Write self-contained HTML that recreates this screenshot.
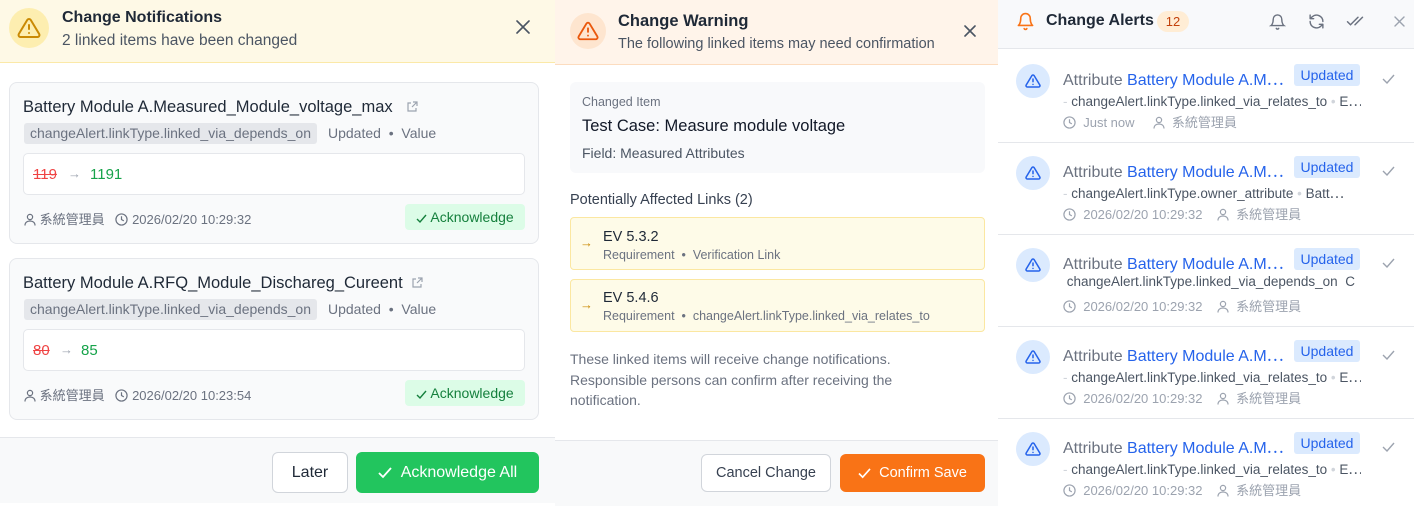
<!DOCTYPE html>
<html><head><meta charset="utf-8"><style>
*{box-sizing:border-box;margin:0;padding:0}
body{width:1414px;height:512px;overflow:hidden;background:#fff;font-family:"Liberation Sans","Noto Sans CJK TC",sans-serif;color:#1f2937;position:relative}
.a{position:absolute;white-space:nowrap}
.g{color:#6b7280}
svg{display:inline-block;vertical-align:-2px}
svg.a{display:block}
</style></head><body>

<!-- LEFT PANEL -->
<div class="a" style="left:0;top:0;width:555px;height:63px;background:#fef9e6;border-bottom:1px solid #fbe9a8"></div>
<div class="a" style="left:9px;top:8px;width:40px;height:40px;border-radius:50%;background:#fdeeb0"></div>
<svg class="a" style="left:17px;top:16px" width="24" height="24" viewBox="0 0 24 24" fill="none" stroke="#ca8a04" stroke-width="2" stroke-linecap="round" stroke-linejoin="round"><path d="M10.3 3.9 1.8 18a2 2 0 0 0 1.7 3h17a2 2 0 0 0 1.7-3L13.7 3.9a2 2 0 0 0-3.4 0z"/><path d="M12 9v4M12 17h.01"/></svg>
<div class="a" style="left:62px;top:9px;font-size:16px;font-weight:bold;color:#1f2937">Change Notifications</div>
<div class="a" style="left:62px;top:32px;font-size:15.5px;color:#4b5563">2 linked items have been changed</div>
<svg class="a" style="left:516px;top:20px" width="14" height="14" viewBox="0 0 14 14" stroke="#4b5563" stroke-width="1.6" stroke-linecap="round"><path d="M1 1l12 12M13 1L1 13"/></svg>

<div class="a" style="left:9px;top:82px;width:530px;height:162px;border:1px solid #e5e7eb;border-radius:8px;background:#f9fafb"></div>
<div class="a" style="left:23px;top:98px;font-size:16.5px;color:#1f2937">Battery Module A.Measured_Module_voltage_max</div>
<svg class="a" style="left:406px;top:101px" width="12" height="12" viewBox="0 0 12 12" fill="none" stroke="#9ca3af" stroke-width="1.2"><path d="M5 2H2v8h8V7M7 1h4v4M11 1L6 6"/></svg>
<div class="a" style="left:24px;top:123px;height:21px;padding:0 6px;background:#e5e7eb;border-radius:3px;font-size:14px;line-height:21px;color:#6b7280">changeAlert.linkType.linked_via_depends_on</div>
<div class="a g" style="left:328px;top:125px;font-size:14px">Updated &nbsp;•&nbsp; Value</div>
<div class="a" style="left:23px;top:153px;width:502px;height:42px;background:#fff;border:1px solid #e5e7eb;border-radius:5px"></div>
<div class="a" style="left:33px;top:166px;font-size:15px;color:#ef4444;text-decoration:line-through">119</div>
<div class="a" style="left:68px;top:166px;font-size:13px;color:#9ca3af">→</div>
<div class="a" style="left:90px;top:166px;font-size:15px;color:#16a34a">1191</div>
<div class="a g" style="left:24px;top:209px;font-size:13px"><svg width="12" height="13" viewBox="0 0 12 13" fill="none" stroke="#6b7280" stroke-width="1.2"><circle cx="6" cy="4" r="2.6"/><path d="M1 12.5c0-3 2.2-4.5 5-4.5s5 1.5 5 4.5"/></svg> 系統管理員 &nbsp;&nbsp;<svg width="13" height="13" viewBox="0 0 14 14" fill="none" stroke="#6b7280" stroke-width="1.3"><circle cx="7" cy="7" r="6"/><path d="M7 3.5V7l2.5 1.5"/></svg> 2026/02/20 10:29:32</div>
<div class="a" style="left:405px;top:204px;width:120px;height:26px;background:#dcfce7;border-radius:4px;font-size:14px;line-height:26px;text-align:center;color:#15803d"><svg width="11" height="10" viewBox="0 0 11 10" fill="none" stroke="#15803d" stroke-width="1.4"><path d="M1 5l3 3 6-7"/></svg> Acknowledge</div>

<div class="a" style="left:9px;top:258px;width:530px;height:162px;border:1px solid #e5e7eb;border-radius:8px;background:#f9fafb"></div>
<div class="a" style="left:23px;top:274px;font-size:16.5px;color:#1f2937">Battery Module A.RFQ_Module_Dischareg_Cureent</div>
<svg class="a" style="left:411px;top:277px" width="12" height="12" viewBox="0 0 12 12" fill="none" stroke="#9ca3af" stroke-width="1.2"><path d="M5 2H2v8h8V7M7 1h4v4M11 1L6 6"/></svg>
<div class="a" style="left:24px;top:299px;height:21px;padding:0 6px;background:#e5e7eb;border-radius:3px;font-size:14px;line-height:21px;color:#6b7280">changeAlert.linkType.linked_via_depends_on</div>
<div class="a g" style="left:328px;top:301px;font-size:14px">Updated &nbsp;•&nbsp; Value</div>
<div class="a" style="left:23px;top:329px;width:502px;height:42px;background:#fff;border:1px solid #e5e7eb;border-radius:5px"></div>
<div class="a" style="left:33px;top:342px;font-size:15px;color:#ef4444;text-decoration:line-through">80</div>
<div class="a" style="left:60px;top:342px;font-size:13px;color:#9ca3af">→</div>
<div class="a" style="left:81px;top:342px;font-size:15px;color:#16a34a">85</div>
<div class="a g" style="left:24px;top:385px;font-size:13px"><svg width="12" height="13" viewBox="0 0 12 13" fill="none" stroke="#6b7280" stroke-width="1.2"><circle cx="6" cy="4" r="2.6"/><path d="M1 12.5c0-3 2.2-4.5 5-4.5s5 1.5 5 4.5"/></svg> 系統管理員 &nbsp;&nbsp;<svg width="13" height="13" viewBox="0 0 14 14" fill="none" stroke="#6b7280" stroke-width="1.3"><circle cx="7" cy="7" r="6"/><path d="M7 3.5V7l2.5 1.5"/></svg> 2026/02/20 10:23:54</div>
<div class="a" style="left:405px;top:380px;width:120px;height:26px;background:#dcfce7;border-radius:4px;font-size:14px;line-height:26px;text-align:center;color:#15803d"><svg width="11" height="10" viewBox="0 0 11 10" fill="none" stroke="#15803d" stroke-width="1.4"><path d="M1 5l3 3 6-7"/></svg> Acknowledge</div>

<div class="a" style="left:0;top:437px;width:555px;height:66px;background:#f8f9fa;border-top:1px solid #e5e7eb"></div>
<div class="a" style="left:272px;top:452px;width:76px;height:41px;background:#fff;border:1px solid #d1d5db;border-radius:6px;font-size:16px;line-height:39px;text-align:center">Later</div>
<div class="a" style="left:356px;top:452px;width:183px;height:41px;background:#22c55e;border-radius:6px;font-size:16px;line-height:41px;text-align:center;color:#fff"><svg width="14" height="12" viewBox="0 0 14 12" fill="none" stroke="#fff" stroke-width="1.8"><path d="M1 6l4 4 8-9"/></svg> &nbsp;Acknowledge All</div>

<!-- MIDDLE PANEL -->
<div class="a" style="left:555px;top:0;width:443px;height:65px;background:#fff4ea;border-bottom:1px solid #fcdcbf"></div>
<div class="a" style="left:570px;top:13px;width:36px;height:36px;border-radius:50%;background:#fee5cf"></div>
<svg class="a" style="left:577px;top:20px" width="22" height="22" viewBox="0 0 24 24" fill="none" stroke="#ea580c" stroke-width="2" stroke-linecap="round" stroke-linejoin="round"><path d="M10.3 3.9 1.8 18a2 2 0 0 0 1.7 3h17a2 2 0 0 0 1.7-3L13.7 3.9a2 2 0 0 0-3.4 0z"/><path d="M12 9v4M12 17h.01"/></svg>
<div class="a" style="left:618px;top:12px;font-size:16.5px;font-weight:bold">Change Warning</div>
<div class="a" style="left:618px;top:36px;font-size:14.5px;color:#4b5563">The following linked items may need confirmation</div>
<svg class="a" style="left:964px;top:25px" width="12" height="12" viewBox="0 0 12 12" stroke="#4b5563" stroke-width="1.6" stroke-linecap="round"><path d="M1 1l10 10M11 1L1 11"/></svg>

<div class="a" style="left:570px;top:82px;width:415px;height:91px;background:#f8f9fb;border-radius:6px"></div>
<div class="a g" style="left:582px;top:95px;font-size:12.5px">Changed Item</div>
<div class="a" style="left:582px;top:117px;font-size:16.5px;color:#111827">Test Case: Measure module voltage</div>
<div class="a" style="left:582px;top:145px;font-size:14px;color:#4b5563">Field: Measured Attributes</div>
<div class="a" style="left:570px;top:192px;font-size:14.5px;color:#374151">Potentially Affected Links (2)</div>

<div class="a" style="left:570px;top:217px;width:415px;height:53px;background:#fefbe8;border:1px solid #fbe7a1;border-radius:4px"></div>
<div class="a" style="left:580px;top:235px;font-size:13px;color:#ca8a04">→</div>
<div class="a" style="left:603px;top:229px;font-size:14.5px">EV 5.3.2</div>
<div class="a g" style="left:603px;top:248px;font-size:12.5px">Requirement &nbsp;•&nbsp; Verification Link</div>
<div class="a" style="left:570px;top:279px;width:415px;height:53px;background:#fefbe8;border:1px solid #fbe7a1;border-radius:4px"></div>
<div class="a" style="left:580px;top:297px;font-size:13px;color:#ca8a04">→</div>
<div class="a" style="left:603px;top:290px;font-size:14.5px">EV 5.4.6</div>
<div class="a g" style="left:603px;top:309px;font-size:12.5px">Requirement &nbsp;•&nbsp; changeAlert.linkType.linked_via_relates_to</div>
<div class="a g" style="left:570px;top:349px;font-size:14px;line-height:20.5px;white-space:normal;width:360px">These linked items will receive change notifications. Responsible persons can confirm after receiving the notification.</div>

<div class="a" style="left:555px;top:440px;width:443px;height:66px;background:#f8f9fa;border-top:1px solid #e5e7eb"></div>
<div class="a" style="left:701px;top:454px;width:130px;height:38px;background:#fff;border:1px solid #d1d5db;border-radius:6px;font-size:14.5px;line-height:36px;text-align:center;color:#374151">Cancel Change</div>
<div class="a" style="left:840px;top:454px;width:145px;height:38px;background:#f97316;border-radius:6px;font-size:14.5px;line-height:38px;text-align:center;color:#fff"><svg width="13" height="11" viewBox="0 0 14 12" fill="none" stroke="#fff" stroke-width="1.8"><path d="M1 6l4 4 8-9"/></svg> &nbsp;Confirm Save</div>

<!-- RIGHT PANEL -->
<div class="a" style="left:998px;top:0;width:416px;height:49px;background:#f8f9fb;border-bottom:1px solid #e5e7eb"></div>
<svg class="a" style="left:1016px;top:11px" width="19" height="21" viewBox="0 0 24 24" fill="none" stroke="#f97316" stroke-width="2" stroke-linecap="round" stroke-linejoin="round"><path d="M6 8a6 6 0 0 1 12 0c0 7 3 9 3 9H3s3-2 3-9"/><path d="M10.3 21a1.9 1.9 0 0 0 3.4 0"/></svg>
<div class="a" style="left:1046px;top:12px;font-size:16px;font-weight:bold;color:#1f2937">Change Alerts</div>
<div class="a" style="left:1157px;top:11px;width:32px;height:21px;background:#ffedd5;border-radius:11px;font-size:13px;line-height:21px;text-align:center;color:#c2410c">12</div>
<svg class="a" style="left:1269px;top:13px" width="17" height="18" viewBox="0 0 24 24" fill="none" stroke="#6b7280" stroke-width="2" stroke-linecap="round"><path d="M6 8a6 6 0 0 1 12 0c0 7 3 9 3 9H3s3-2 3-9"/><path d="M10.3 21a1.9 1.9 0 0 0 3.4 0"/></svg>
<svg class="a" style="left:1308px;top:13px" width="17" height="17" viewBox="0 0 24 24" fill="none" stroke="#6b7280" stroke-width="2" stroke-linecap="round" stroke-linejoin="round"><path d="M21 12a9 9 0 0 0-15-6.7L3 8M3 3v5h5M3 12a9 9 0 0 0 15 6.7L21 16M21 21v-5h-5"/></svg>
<svg class="a" style="left:1346px;top:14px" width="18" height="14" viewBox="0 0 24 18" fill="none" stroke="#6b7280" stroke-width="2" stroke-linecap="round"><path d="M2 10l4 4 10-10M12 14l10-10"/></svg>
<svg class="a" style="left:1394px;top:16px" width="11" height="11" viewBox="0 0 11 11" stroke="#9ca3af" stroke-width="1.4" stroke-linecap="round"><path d="M1 1l9 9M10 1L1 10"/></svg>

<div class="a" style="left:998px;top:142px;width:416px;border-top:1px solid #e5e7eb"></div>
<div class="a" style="left:998px;top:234px;width:416px;border-top:1px solid #e5e7eb"></div>
<div class="a" style="left:998px;top:326px;width:416px;border-top:1px solid #e5e7eb"></div>
<div class="a" style="left:998px;top:418px;width:416px;border-top:1px solid #e5e7eb"></div>

<div class="a" style="left:1016px;top:64px;width:34px;height:34px;border-radius:50%;background:#dbeafe"></div>
<div class="a" style="left:1016px;top:156px;width:34px;height:34px;border-radius:50%;background:#dbeafe"></div>
<div class="a" style="left:1016px;top:248px;width:34px;height:34px;border-radius:50%;background:#dbeafe"></div>
<div class="a" style="left:1016px;top:340px;width:34px;height:34px;border-radius:50%;background:#dbeafe"></div>
<div class="a" style="left:1016px;top:432px;width:34px;height:34px;border-radius:50%;background:#dbeafe"></div>

<svg class="a" style="left:1025px;top:73px" width="16" height="16" viewBox="0 0 24 24" fill="none" stroke="#2563eb" stroke-width="2.3" stroke-linecap="round" stroke-linejoin="round"><path d="M10.3 3.9 1.8 18a2 2 0 0 0 1.7 3h17a2 2 0 0 0 1.7-3L13.7 3.9a2 2 0 0 0-3.4 0z"/><path d="M12 9v4M12 17h.01"/></svg>
<svg class="a" style="left:1025px;top:165px" width="16" height="16" viewBox="0 0 24 24" fill="none" stroke="#2563eb" stroke-width="2.3" stroke-linecap="round" stroke-linejoin="round"><path d="M10.3 3.9 1.8 18a2 2 0 0 0 1.7 3h17a2 2 0 0 0 1.7-3L13.7 3.9a2 2 0 0 0-3.4 0z"/><path d="M12 9v4M12 17h.01"/></svg>
<svg class="a" style="left:1025px;top:257px" width="16" height="16" viewBox="0 0 24 24" fill="none" stroke="#2563eb" stroke-width="2.3" stroke-linecap="round" stroke-linejoin="round"><path d="M10.3 3.9 1.8 18a2 2 0 0 0 1.7 3h17a2 2 0 0 0 1.7-3L13.7 3.9a2 2 0 0 0-3.4 0z"/><path d="M12 9v4M12 17h.01"/></svg>
<svg class="a" style="left:1025px;top:349px" width="16" height="16" viewBox="0 0 24 24" fill="none" stroke="#2563eb" stroke-width="2.3" stroke-linecap="round" stroke-linejoin="round"><path d="M10.3 3.9 1.8 18a2 2 0 0 0 1.7 3h17a2 2 0 0 0 1.7-3L13.7 3.9a2 2 0 0 0-3.4 0z"/><path d="M12 9v4M12 17h.01"/></svg>
<svg class="a" style="left:1025px;top:441px" width="16" height="16" viewBox="0 0 24 24" fill="none" stroke="#2563eb" stroke-width="2.3" stroke-linecap="round" stroke-linejoin="round"><path d="M10.3 3.9 1.8 18a2 2 0 0 0 1.7 3h17a2 2 0 0 0 1.7-3L13.7 3.9a2 2 0 0 0-3.4 0z"/><path d="M12 9v4M12 17h.01"/></svg>

<div class="a" style="left:1063px;top:66px;font-size:16px;color:#6b7280">Attribute <span style="color:#2563eb">Battery Module A.M⋯</span></div>
<div class="a" style="left:1063px;top:158px;font-size:16px;color:#6b7280">Attribute <span style="color:#2563eb">Battery Module A.M⋯</span></div>
<div class="a" style="left:1063px;top:250px;font-size:16px;color:#6b7280">Attribute <span style="color:#2563eb">Battery Module A.M⋯</span></div>
<div class="a" style="left:1063px;top:342px;font-size:16px;color:#6b7280">Attribute <span style="color:#2563eb">Battery Module A.M⋯</span></div>
<div class="a" style="left:1063px;top:434px;font-size:16px;color:#6b7280">Attribute <span style="color:#2563eb">Battery Module A.M⋯</span></div>

<div class="a" style="left:1294px;top:64px;width:66px;height:22px;background:#dbeafe;border-radius:3px;font-size:14px;line-height:22px;text-align:center;color:#2563eb">Updated</div>
<div class="a" style="left:1294px;top:156px;width:66px;height:22px;background:#dbeafe;border-radius:3px;font-size:14px;line-height:22px;text-align:center;color:#2563eb">Updated</div>
<div class="a" style="left:1294px;top:248px;width:66px;height:22px;background:#dbeafe;border-radius:3px;font-size:14px;line-height:22px;text-align:center;color:#2563eb">Updated</div>
<div class="a" style="left:1294px;top:340px;width:66px;height:22px;background:#dbeafe;border-radius:3px;font-size:14px;line-height:22px;text-align:center;color:#2563eb">Updated</div>
<div class="a" style="left:1294px;top:432px;width:66px;height:22px;background:#dbeafe;border-radius:3px;font-size:14px;line-height:22px;text-align:center;color:#2563eb">Updated</div>

<svg class="a" style="left:1382px;top:74px" width="13" height="10" viewBox="0 0 13 10" fill="none" stroke="#9ca3af" stroke-width="1.4"><path d="M1 5l4 4 7-8"/></svg>
<svg class="a" style="left:1382px;top:166px" width="13" height="10" viewBox="0 0 13 10" fill="none" stroke="#9ca3af" stroke-width="1.4"><path d="M1 5l4 4 7-8"/></svg>
<svg class="a" style="left:1382px;top:258px" width="13" height="10" viewBox="0 0 13 10" fill="none" stroke="#9ca3af" stroke-width="1.4"><path d="M1 5l4 4 7-8"/></svg>
<svg class="a" style="left:1382px;top:350px" width="13" height="10" viewBox="0 0 13 10" fill="none" stroke="#9ca3af" stroke-width="1.4"><path d="M1 5l4 4 7-8"/></svg>
<svg class="a" style="left:1382px;top:442px" width="13" height="10" viewBox="0 0 13 10" fill="none" stroke="#9ca3af" stroke-width="1.4"><path d="M1 5l4 4 7-8"/></svg>

<div class="a" style="left:1063px;top:90px;width:298px;overflow:hidden;font-size:13.5px;color:#4b5563"><span style="color:#d1d5db">-</span> changeAlert.linkType.linked_via_relates_to <span style="color:#d1d5db">•</span> E⋯</div>
<div class="a" style="left:1063px;top:182px;width:298px;overflow:hidden;font-size:13.5px;color:#4b5563"><span style="color:#d1d5db">-</span> changeAlert.linkType.owner_attribute <span style="color:#d1d5db">•</span> Batt⋯</div>
<div class="a" style="left:1063px;top:274px;width:298px;overflow:hidden;font-size:13.5px;color:#4b5563">&nbsp;changeAlert.linkType.linked_via_depends_on &nbsp;C</div>
<div class="a" style="left:1063px;top:366px;width:298px;overflow:hidden;font-size:13.5px;color:#4b5563"><span style="color:#d1d5db">-</span> changeAlert.linkType.linked_via_relates_to <span style="color:#d1d5db">•</span> E⋯</div>
<div class="a" style="left:1063px;top:458px;width:298px;overflow:hidden;font-size:13.5px;color:#4b5563"><span style="color:#d1d5db">-</span> changeAlert.linkType.linked_via_relates_to <span style="color:#d1d5db">•</span> E⋯</div>

<div class="a" style="left:1063px;top:112px;font-size:13px;color:#9ca3af"><svg width="13" height="13" viewBox="0 0 14 14" fill="none" stroke="#9ca3af" stroke-width="1.3"><circle cx="7" cy="7" r="6"/><path d="M7 3.5V7l2.5 1.5"/></svg> &nbsp;Just now &nbsp;&nbsp;&nbsp;&nbsp;<svg width="12" height="13" viewBox="0 0 12 13" fill="none" stroke="#9ca3af" stroke-width="1.2"><circle cx="6" cy="4" r="2.6"/><path d="M1 12.5c0-3 2.2-4.5 5-4.5s5 1.5 5 4.5"/></svg> &nbsp;系統管理員</div>
<div class="a" style="left:1063px;top:204px;font-size:13px;color:#9ca3af"><svg width="13" height="13" viewBox="0 0 14 14" fill="none" stroke="#9ca3af" stroke-width="1.3"><circle cx="7" cy="7" r="6"/><path d="M7 3.5V7l2.5 1.5"/></svg> &nbsp;2026/02/20 10:29:32 &nbsp;&nbsp;&nbsp;<svg width="12" height="13" viewBox="0 0 12 13" fill="none" stroke="#9ca3af" stroke-width="1.2"><circle cx="6" cy="4" r="2.6"/><path d="M1 12.5c0-3 2.2-4.5 5-4.5s5 1.5 5 4.5"/></svg> &nbsp;系統管理員</div>
<div class="a" style="left:1063px;top:296px;font-size:13px;color:#9ca3af"><svg width="13" height="13" viewBox="0 0 14 14" fill="none" stroke="#9ca3af" stroke-width="1.3"><circle cx="7" cy="7" r="6"/><path d="M7 3.5V7l2.5 1.5"/></svg> &nbsp;2026/02/20 10:29:32 &nbsp;&nbsp;&nbsp;<svg width="12" height="13" viewBox="0 0 12 13" fill="none" stroke="#9ca3af" stroke-width="1.2"><circle cx="6" cy="4" r="2.6"/><path d="M1 12.5c0-3 2.2-4.5 5-4.5s5 1.5 5 4.5"/></svg> &nbsp;系統管理員</div>
<div class="a" style="left:1063px;top:388px;font-size:13px;color:#9ca3af"><svg width="13" height="13" viewBox="0 0 14 14" fill="none" stroke="#9ca3af" stroke-width="1.3"><circle cx="7" cy="7" r="6"/><path d="M7 3.5V7l2.5 1.5"/></svg> &nbsp;2026/02/20 10:29:32 &nbsp;&nbsp;&nbsp;<svg width="12" height="13" viewBox="0 0 12 13" fill="none" stroke="#9ca3af" stroke-width="1.2"><circle cx="6" cy="4" r="2.6"/><path d="M1 12.5c0-3 2.2-4.5 5-4.5s5 1.5 5 4.5"/></svg> &nbsp;系統管理員</div>
<div class="a" style="left:1063px;top:480px;font-size:13px;color:#9ca3af"><svg width="13" height="13" viewBox="0 0 14 14" fill="none" stroke="#9ca3af" stroke-width="1.3"><circle cx="7" cy="7" r="6"/><path d="M7 3.5V7l2.5 1.5"/></svg> &nbsp;2026/02/20 10:29:32 &nbsp;&nbsp;&nbsp;<svg width="12" height="13" viewBox="0 0 12 13" fill="none" stroke="#9ca3af" stroke-width="1.2"><circle cx="6" cy="4" r="2.6"/><path d="M1 12.5c0-3 2.2-4.5 5-4.5s5 1.5 5 4.5"/></svg> &nbsp;系統管理員</div>
</body></html>
